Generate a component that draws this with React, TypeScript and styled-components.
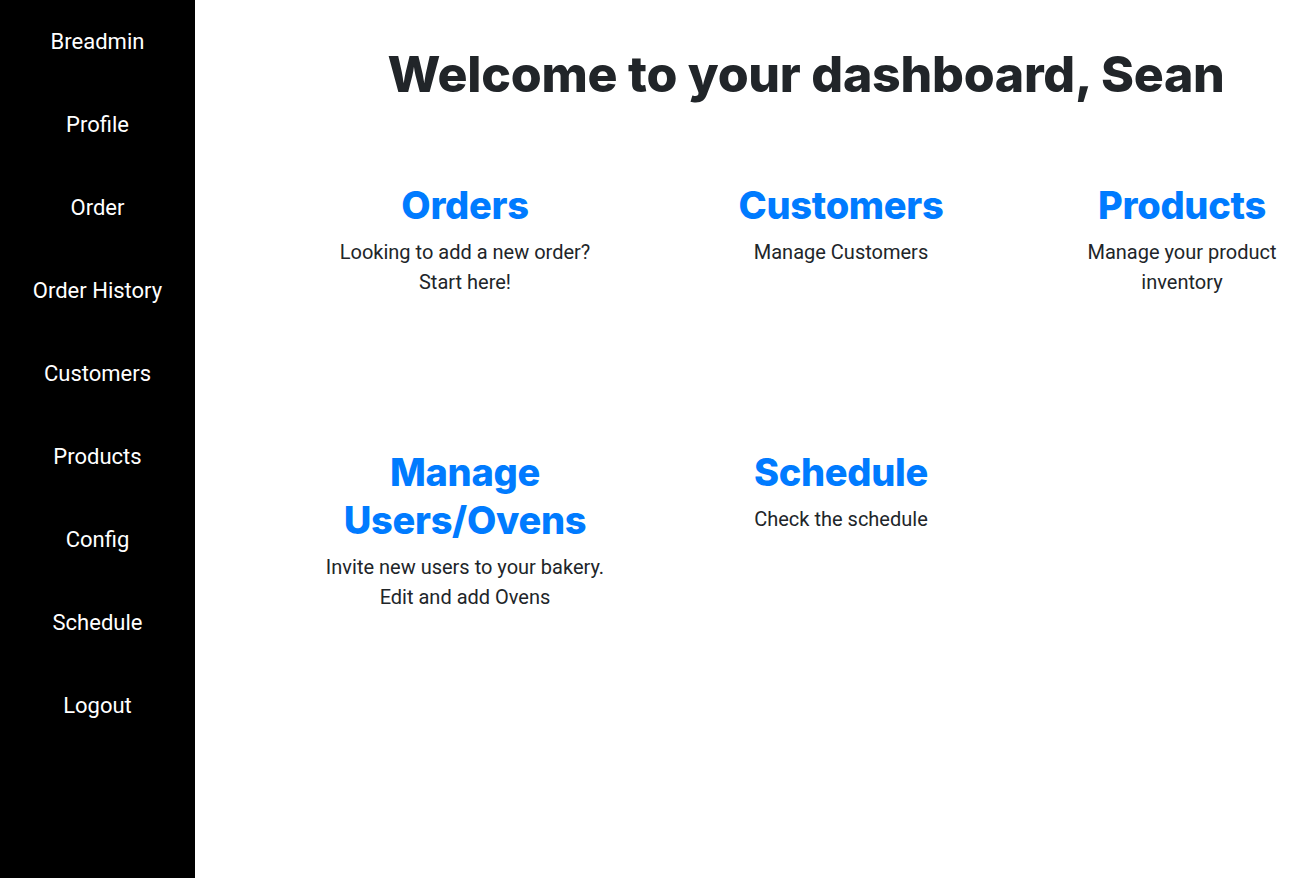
import styled, { createGlobalStyle } from "styled-components"

type Tile = {
    title: string
    desc: string
}

const navItems = ["Breadmin","Profile","Order","Order History","Customers","Products","Config","Schedule","Logout"]

const tiles: Tile[] = [
    {title: "Orders", desc: "Looking to add a new order? Start here!"},
    {title: "Customers", desc: "Manage Customers"},
    {title: "Products", desc: "Manage your product inventory"},
    {title: "Manage Users/Ovens", desc: "Invite new users to your bakery. Edit and add Ovens"},
    {title: "Schedule", desc: "Check the schedule"},
]

export default function App(){
    return(
        <>
            <GlobalStyle/>
            <Page>
                <SideNav>
                    {navItems.map((item)=>(
                        <NavLink key={item}>{item}</NavLink>
                    ))}
                </SideNav>
                <Main>
                    <Welcome>Welcome to your dashboard, Sean</Welcome>
                    <TileGrid>
                        {tiles.map((tile)=>(
                            <TileCard key={tile.title}>
                                <h1>{tile.title}</h1>
                                <p>{tile.desc}</p>
                            </TileCard>
                        ))}
                    </TileGrid>
                </Main>
            </Page>
        </>
    )
}

const GlobalStyle = createGlobalStyle`
    *{
        box-sizing: border-box;
    }
    body{
        margin: 0;
        font-family: Roboto, "Liberation Sans", sans-serif;
        color: #212529;
        background: #fff;
        overflow: hidden;
    }
`;

const Page = styled.div`
    display: flex;
    width: 1300px;
    height: 878px;
    overflow: hidden;
`;

const SideNav = styled.nav`
    width: 195px;
    flex-shrink: 0;
    background-color: #000;
    display: flex;
    flex-direction: column;
`;

const NavLink = styled.a`
    height: 83px;
    display: flex;
    align-items: center;
    justify-content: center;
    color: #fff;
    font-size: 22px;
    cursor: pointer;
`;

const Main = styled.main`
    flex: 1;
    padding-left: 117px;
    min-width: 0;
`;

const Welcome = styled.h1`
    margin: 0;
    padding-top: 44px;
    height: 181px;
    text-align: center;
    font-family: Inter, "Noto Sans", sans-serif;
    font-weight: 800;
    font-size: 50px;
    line-height: 60px;
    letter-spacing: -0.25px;
    color: #212529;
`;

const TileGrid = styled.div`
    display: grid;
    grid-template-columns: 306px 306px 1fr;
    grid-auto-rows: 267px;
    column-gap: 70px;
`;

const TileCard = styled.div`
    text-align: center;
    padding: 0 10px;

    h1{
        margin: 0 0 8px;
        font-family: Inter, "Noto Sans", sans-serif;
        font-weight: 800;
        font-size: 38px;
        line-height: 48px;
        letter-spacing: -0.3px;
        color: #007bff;
    }
    p{
        margin: 0;
        font-size: 20px;
        line-height: 30px;
        color: #212529;
    }
`;
